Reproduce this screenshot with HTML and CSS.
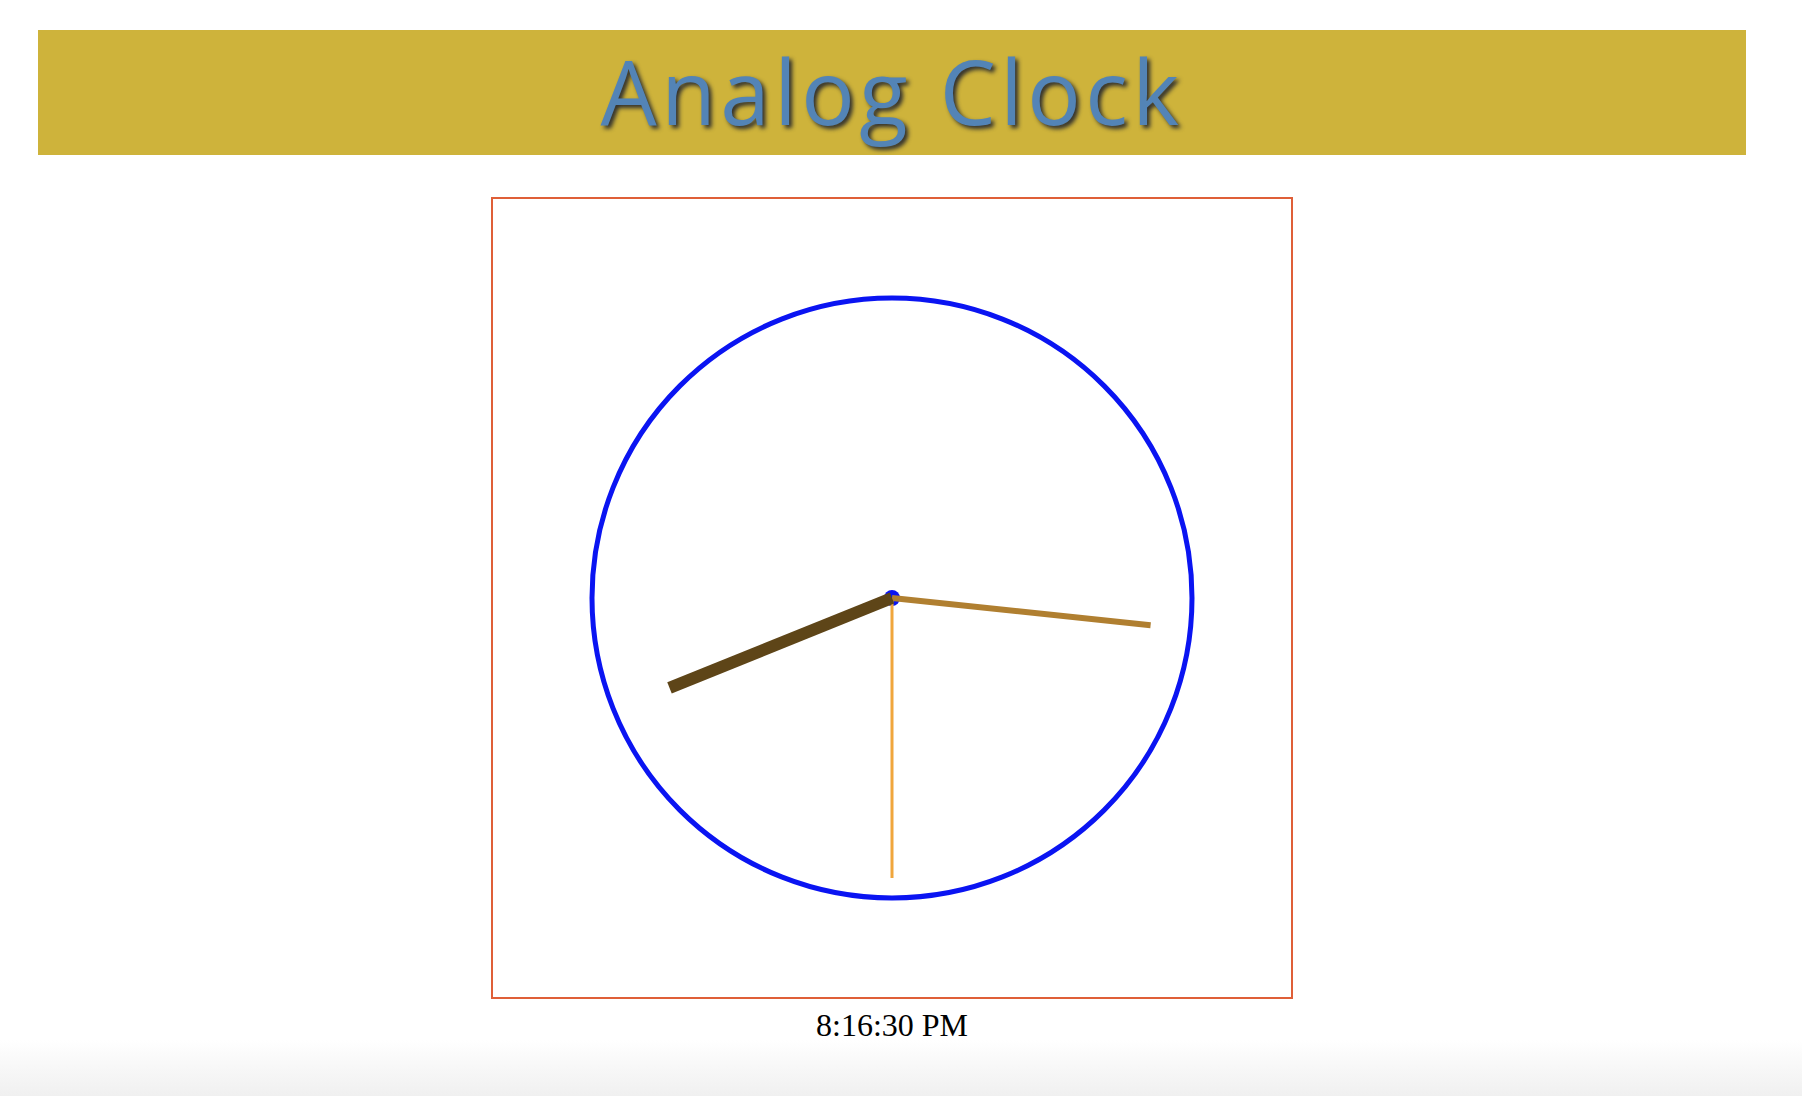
FILE: index.html
```html
<!DOCTYPE html>
<html>
<head>
<meta charset="utf-8">
<link rel="stylesheet" href="styles.css">
</head>
<body>
<div class="page">
  <header class="banner"><h1 class="title">Analog Clock</h1></header>
  <div class="clock-box">
    <svg class="clock" viewBox="1 1 798 798" width="798" height="798">
      <circle cx="400" cy="400" r="300" fill="none" stroke="#0a14f2" stroke-width="5"/>
      <circle cx="400" cy="400" r="8" fill="#0a14f2"/>
      <line x1="400" y1="400" x2="400" y2="680" stroke="#f0a63c" stroke-width="3"/>
      <line x1="400" y1="400" x2="658.6" y2="427.2" stroke="#b07f30" stroke-width="6"/>
      <line x1="400" y1="400" x2="177.5" y2="489.9" stroke="#5e4518" stroke-width="12"/>
    </svg>
  </div>
  <p class="time">8:16:30 PM</p>
</div>
</body>
</html>
```
FILE: styles.css
```css
html {
  background: linear-gradient(to bottom, #ffffff 0px, #ffffff 1040px, #f0f0f0 1096px);
  min-height: 100%;
}
body {
  margin: 0;
  font-family: "Liberation Serif", serif;
}
.page {
  width: 1784px;
  display: flex;
  flex-direction: column;
  align-items: center;
}
.banner {
  box-sizing: border-box;
  width: 1708px;
  height: 125px;
  margin-top: 30px;
  background: #ceb33b;
  display: flex;
  align-items: center;
  justify-content: center;
}
.title {
  margin: 0;
  font-family: "Open Sans", sans-serif;
  font-weight: 400;
  font-size: 89px;
  letter-spacing: 4.5px;
  color: #5384b6;
  text-shadow: 3px 3px 4px #2e2e2e;
  line-height: 1;
  padding-bottom: 4px;
}
.clock-box {
  margin-top: 42px;
  width: 798px;
  height: 798px;
  border: 2px solid #df5f38;
}
.clock {
  display: block;
}
.time {
  margin: 8px 0 0;
  font-size: 32px;
  color: #000;
}
```
